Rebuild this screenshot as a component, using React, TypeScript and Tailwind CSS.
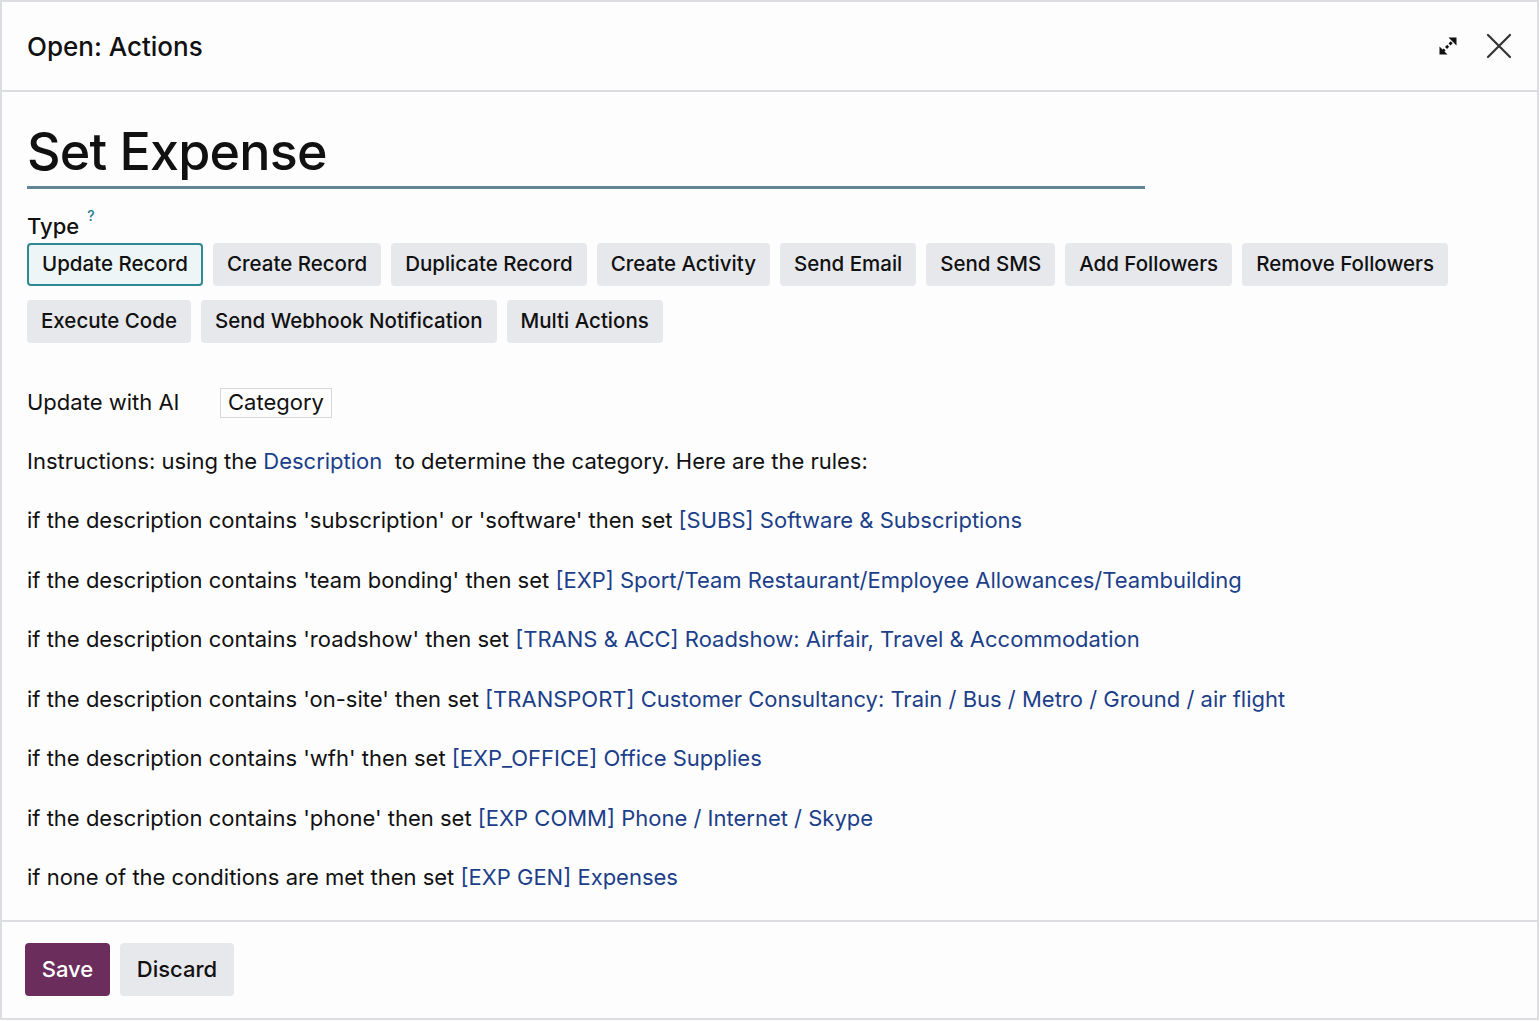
import React from "react";

const types = [
  "Update Record",
  "Create Record",
  "Duplicate Record",
  "Create Activity",
  "Send Email",
  "Send SMS",
  "Add Followers",
  "Remove Followers",
  "Execute Code",
  "Send Webhook Notification",
  "Multi Actions",
];

const rules: [string, string][] = [
  ["if the description contains 'subscription' or 'software' then set ", "[SUBS] Software & Subscriptions"],
  ["if the description contains 'team bonding' then set ", "[EXP] Sport/Team Restaurant/Employee Allowances/Teambuilding"],
  ["if the description contains 'roadshow' then set ", "[TRANS & ACC] Roadshow: Airfair, Travel & Accommodation"],
  ["if the description contains 'on-site' then set ", "[TRANSPORT] Customer Consultancy: Train / Bus / Metro / Ground / air flight"],
  ["if the description contains 'wfh' then set ", "[EXP_OFFICE] Office Supplies"],
  ["if the description contains 'phone' then set ", "[EXP COMM] Phone / Internet / Skype"],
  ["if none of the conditions are met then set ", "[EXP GEN] Expenses"],
];

export default function App() {
  return (
    <div
      className="w-[1540px] h-[1021px] bg-white text-[#111111] overflow-hidden"
      style={{ fontFamily: "Inter, 'Liberation Sans', Arial, sans-serif" }}
    >
      <div className="h-[1020px] w-[1539px] border-2 border-[#dcdde1] bg-[#fdfdfd] flex flex-col">
        {/* Header */}
        <div className="h-[90px] shrink-0 border-b-2 border-[#dcdde1] flex items-center justify-between pl-[25px] pr-[24px]">
          <div className="text-[26px] font-medium">Open: Actions</div>
          <div className="flex items-center gap-[25px]">
            <svg width="24" height="24" viewBox="0 0 24 24">
              <path d="M6.5 17.5L17.5 6.5" stroke="#111" strokeWidth="2.8" strokeDasharray="3 2" />
              <path d="M12.5 3.5H20.5V11.5Z" fill="#111" />
              <path d="M11.5 20.5H3.5V12.5Z" fill="#111" />
            </svg>
            <svg width="28" height="28" viewBox="0 0 28 28">
              <path d="M3 3L25 25M25 3L3 25" stroke="#333" strokeWidth="2.2" strokeLinecap="round" />
            </svg>
          </div>
        </div>

        {/* Body */}
        <div className="flex-1 pl-[25px] pr-[24px] pt-[28px]">
          <div className="w-[1118px] border-b-[3px] border-[#5f8597] pb-[2px]">
            <div className="text-[52px] leading-[64px] font-medium tracking-[-0.8px]">Set Expense</div>
          </div>

          <div className="mt-[23px] text-[22px] leading-[28px] font-medium flex items-start">
            Type<span className="text-[#1a7a8f] text-[14px] leading-[14px] ml-[8px] mt-[-3px]">?</span>
          </div>

          <div className="mt-[3px] flex flex-wrap gap-x-[10px] gap-y-[14px] w-[1460px]">
            {types.map((t, i) => (
              <div
                key={t}
                className={
                  i === 0
                    ? "h-[43px] px-[13px] flex items-center rounded-[4px] border-2 border-[#2e8a92] bg-[#eef5f6] text-[20.5px] font-medium"
                    : "h-[43px] px-[14px] flex items-center rounded-[4px] bg-[#e7e8ec] text-[20.5px] font-medium"
                }
              >
                {t}
              </div>
            ))}
          </div>

          <div className="mt-[43px] flex items-center text-[22px]">
            <div className="w-[193px]">Update with AI</div>
            <div className="h-[30px] px-[7px] border border-[#d6d8dc] flex items-center">Category</div>
          </div>

          <div className="mt-[27px] text-[22px] leading-[30px]">
            Instructions: using the <span className="text-[#1c3f8a]">Description</span>&nbsp; to determine the category. Here are the rules:
          </div>

          <div className="mt-[29px] flex flex-col gap-[29.5px] text-[22px] leading-[30px]">
            {rules.map(([a, b]) => (
              <div key={b}>
                {a}
                <span className="text-[#1c3f8a]">{b}</span>
              </div>
            ))}
          </div>
        </div>

        {/* Footer */}
        <div className="h-[98px] shrink-0 border-t-2 border-[#dcdde1] flex items-start gap-[10px] pl-[23px] pt-[21px]">
          <div className="h-[53px] w-[85px] rounded-[4px] bg-[#6b2d5c] text-white text-[22px] font-medium flex items-center justify-center">
            Save
          </div>
          <div className="h-[53px] w-[114px] rounded-[4px] bg-[#e7e8ec] text-[22px] font-medium flex items-center justify-center">
            Discard
          </div>
        </div>
      </div>
    </div>
  );
}
